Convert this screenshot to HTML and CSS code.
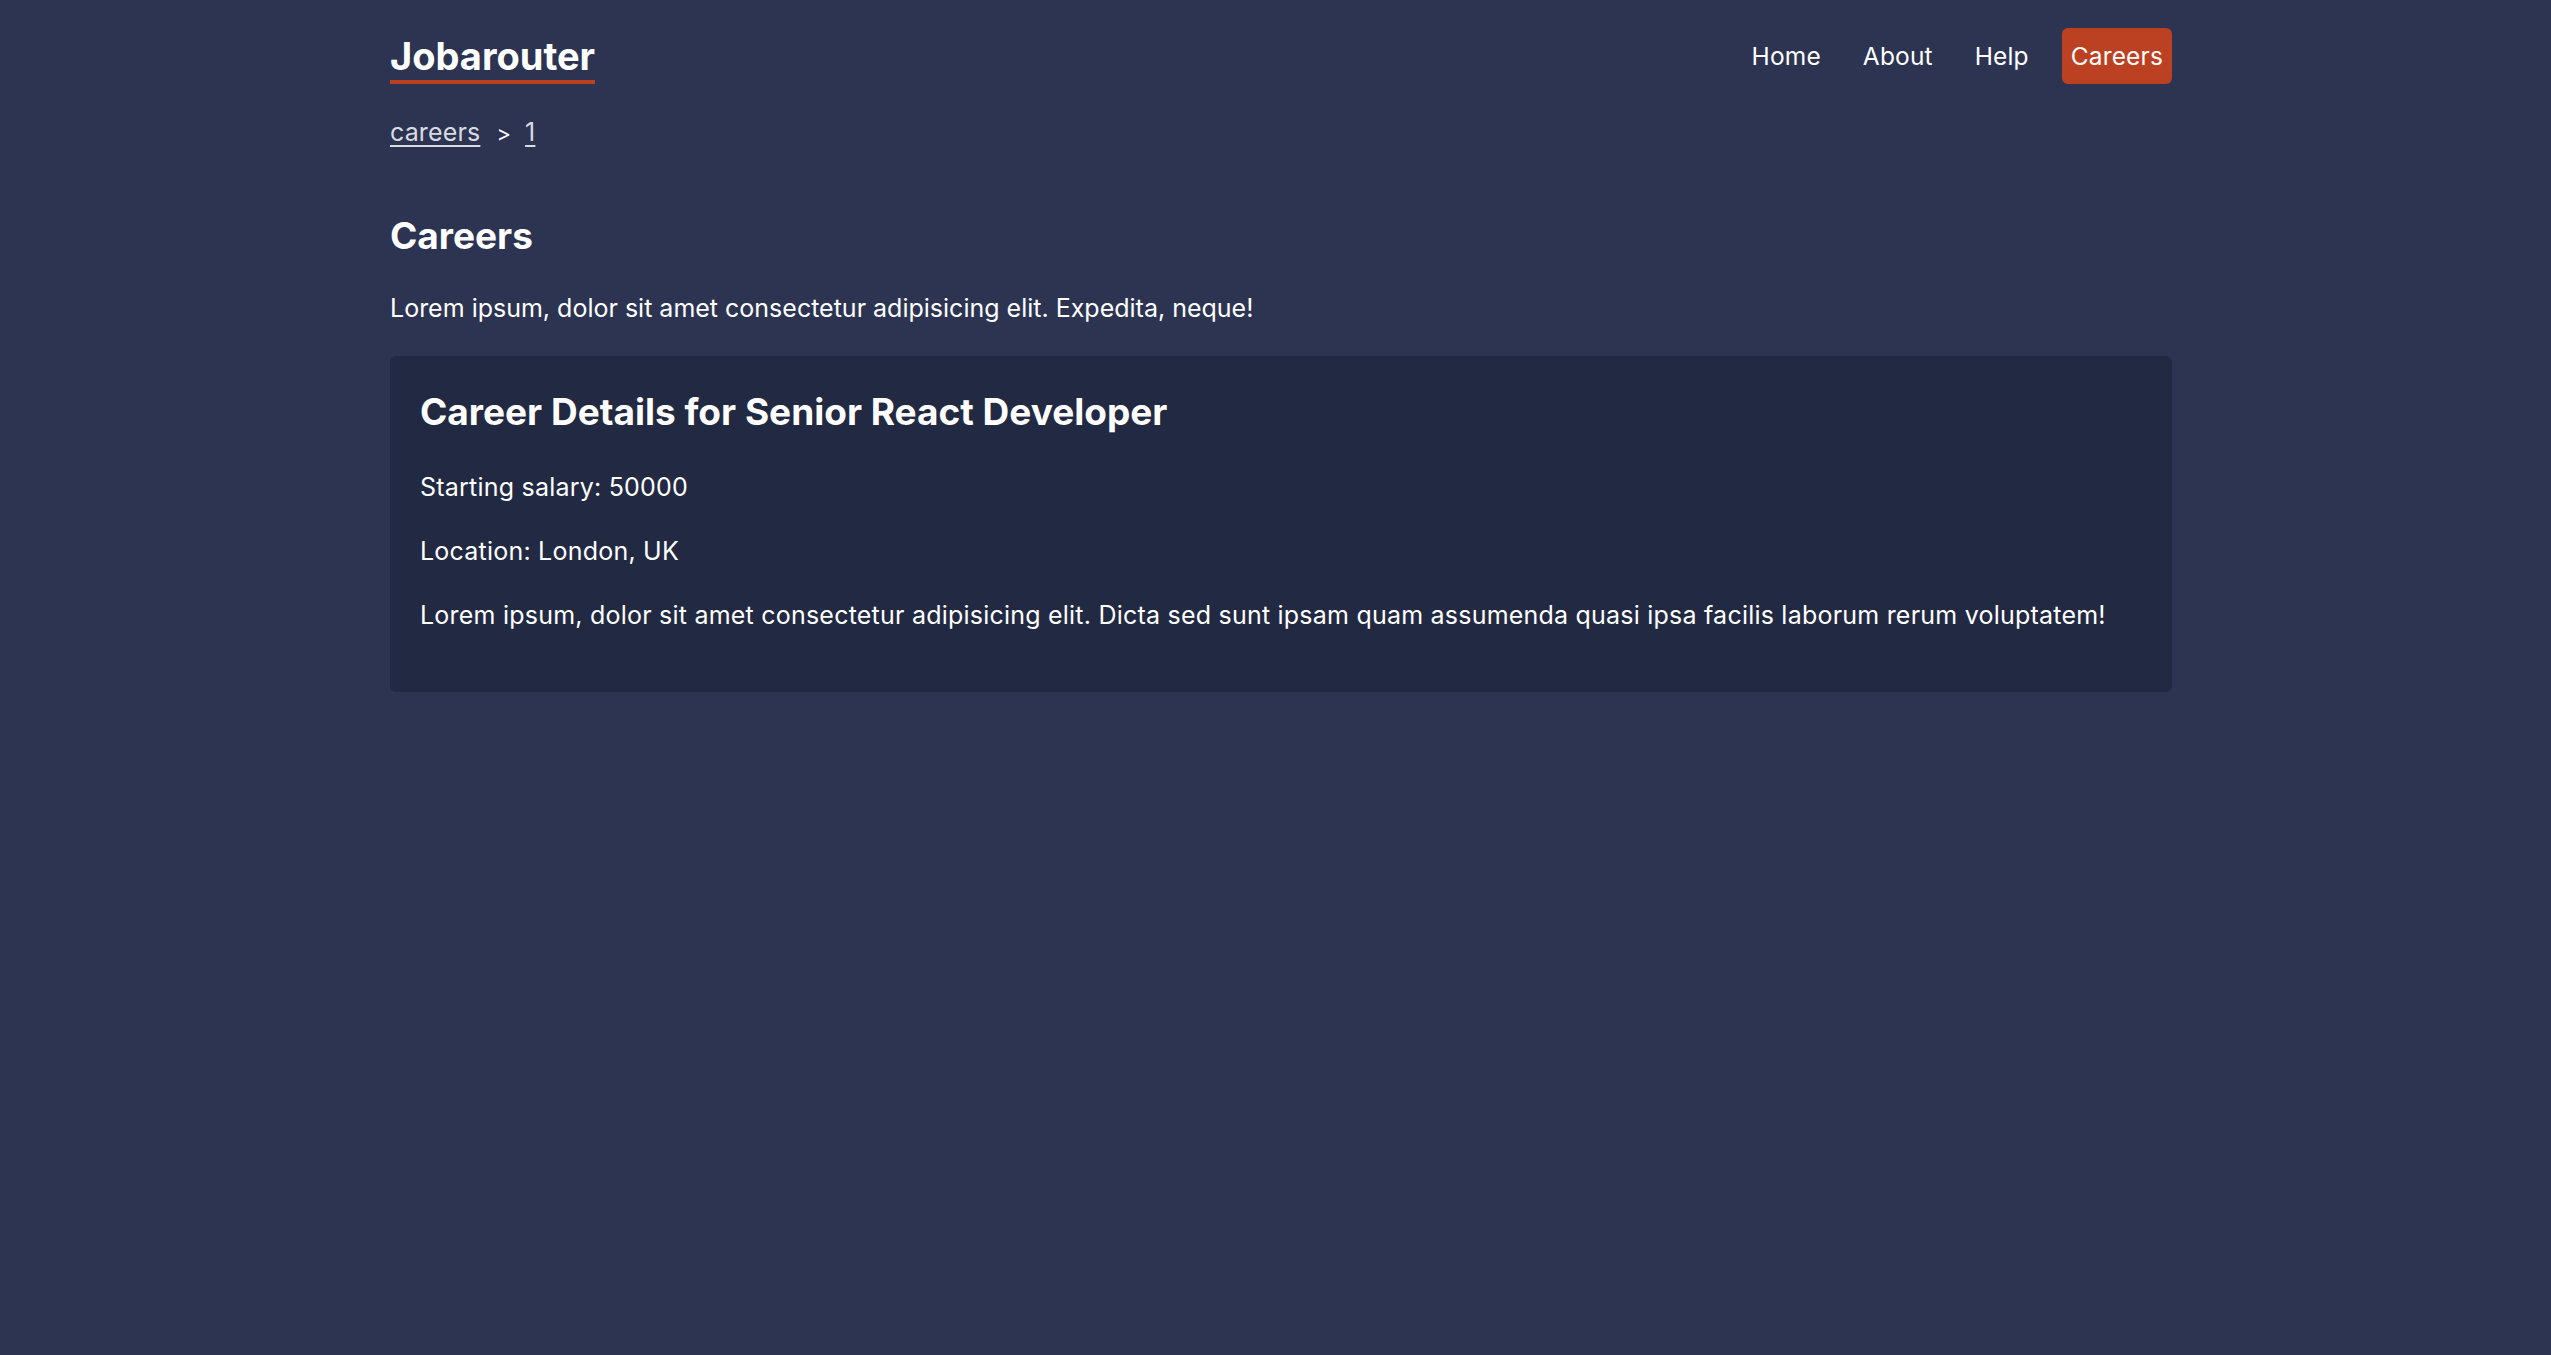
FILE: index.html
```html
<!DOCTYPE html>
<html lang="en">
<head>
<meta charset="utf-8">
<title>Jobarouter</title>
<link rel="stylesheet" href="styles.css">
</head>
<body>
<div class="root">
  <header class="site-header">
    <nav class="nav">
      <h1 class="logo">Jobarouter</h1>
      <a class="nav-link" href="#">Home</a>
      <a class="nav-link" href="#">About</a>
      <a class="nav-link" href="#">Help</a>
      <a class="nav-link active" href="#">Careers</a>
    </nav>
    <div class="breadcrumbs">
      <a class="crumb" href="#">careers</a>
      <span class="sep">&gt;</span>
      <a class="crumb" href="#">1</a>
    </div>
  </header>
  <main class="main">
    <h2 class="page-title">Careers</h2>
    <p class="intro">Lorem ipsum, dolor sit amet consectetur adipisicing elit. Expedita, neque!</p>
    <div class="career-details">
      <h2 class="details-title">Career Details for Senior React Developer</h2>
      <p class="detail">Starting salary: 50000</p>
      <p class="detail">Location: London, UK</p>
      <p class="detail">Lorem ipsum, dolor sit amet consectetur adipisicing elit. Dicta sed sunt ipsam quam assumenda quasi ipsa facilis laborum rerum voluptatem!</p>
    </div>
  </main>
</div>
</body>
</html>
```

FILE: styles.css
```css
html, body {
  margin: 0;
  padding: 0;
}
body {
  background: #2c3452;
  color: #ffffff;
  font-family: "Inter", "Open Sans", sans-serif;
  font-size: 25px;
  letter-spacing: 0.15px;
  min-height: 1355px;
}
.root {
  width: 1782px;
  margin-left: 390px;
}
.site-header {
  padding-top: 28px;
}
.nav {
  display: flex;
  align-items: flex-end;
  gap: 24px;
}
.logo {
  margin: 0 auto 0 0;
  font-size: 38px;
  font-weight: 700;
  line-height: 48px;
  border-bottom: 4px solid #bc4123;
  letter-spacing: 0;
}
.nav-link {
  color: #ffffff;
  text-decoration: none;
  font-size: 24.5px;
  line-height: 38px;
  padding: 9px;
  border-radius: 6px;
}
.nav-link.active {
  background: #bc4123;
}
.breadcrumbs {
  display: flex;
  align-items: baseline;
  margin-top: 30px;
  line-height: 36px;
  color: #d9dbe2;
}
.crumb {
  color: #d9dbe2;
  text-decoration: underline;
  text-underline-offset: 4px;
  text-decoration-thickness: 2px;
}
.sep {
  margin: 0 14px 0 16px;
  font-size: 22px;
  color: #ffffff;
}
.main {
  padding-top: 58px;
}
.page-title {
  margin: 0;
  font-size: 37px;
  font-weight: 700;
  line-height: 54px;
  letter-spacing: 0;
}
.intro {
  margin: 25px 0 0 0;
  line-height: 40px;
  letter-spacing: 0;
}
.career-details {
  margin-top: 28px;
  background: #222942;
  border-radius: 6px;
  padding: 29px 30px 57px 30px;
}
.details-title {
  margin: 0 0 28px 0;
  font-size: 37px;
  font-weight: 700;
  line-height: 54px;
  letter-spacing: 0;
}
.detail {
  margin: 24px 0 0 0;
  line-height: 40px;
  letter-spacing: 0.22px;
}
```
